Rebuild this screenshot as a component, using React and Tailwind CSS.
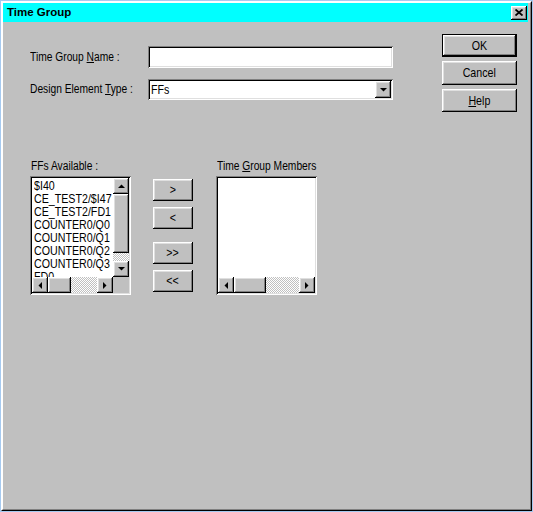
import React from "react";

const raised =
  "bg-[#c0c0c0] shadow-[inset_-1px_-1px_#000,inset_1px_1px_#fff,inset_-2px_-2px_#808080,inset_2px_2px_#dfdfdf]";
const sunken =
  "shadow-[inset_1px_1px_#808080,inset_-1px_-1px_#fff,inset_2px_2px_#000,inset_-2px_-2px_#dfdfdf]";
const dither =
  "bg-[repeating-conic-gradient(#c0c0c0_0%_25%,#ffffff_0%_50%)] bg-[length:2px_2px]";

// no narrow face installed, so squeeze the regular one
function Narrow({ children, center }) {
  return (
    <span
      className={`inline-block whitespace-nowrap scale-x-[0.82] ${
        center ? "origin-center" : "origin-left"
      }`}
    >
      {children}
    </span>
  );
}

function Tri({ dir }) {
  const pts = {
    up: "0,4 7,4 3.5,0.5",
    down: "0,0 7,0 3.5,3.5",
    left: "4,0 4,7 0.5,3.5",
    right: "0,0 0,7 3.5,3.5",
  }[dir];
  const vertical = dir === "up" || dir === "down";
  return (
    <svg width={vertical ? 7 : 4} height={vertical ? 4 : 7} viewBox={vertical ? "0 0 7 4" : "0 0 4 7"}>
      <polygon points={pts} fill="#000" />
    </svg>
  );
}

function ScrollBtn({ dir }) {
  return (
    <div className={`${raised} w-[16px] h-[16px] shrink-0 flex items-center justify-center`}>
      <Tri dir={dir} />
    </div>
  );
}

function HScroll({ thumb }) {
  return (
    <div className="flex h-[16px] flex-1">
      <ScrollBtn dir="left" />
      <div className={`${raised} h-[16px] shrink-0`} style={{ width: thumb }} />
      <div className={`flex-1 ${dither}`} />
      <ScrollBtn dir="right" />
    </div>
  );
}

function ListBox({ items, vscroll }) {
  return (
    <div className={`w-[101px] h-[119px] bg-white p-[2px] ${sunken}`}>
      <div className="h-full flex flex-col">
        <div className="flex flex-1 min-h-0">
          <div className="flex-1 overflow-hidden pl-[2px] pt-px text-[13px] leading-[13px] text-black">
            {items.map((it) => (
              <div key={it} className="whitespace-nowrap">
                <Narrow>{it}</Narrow>
              </div>
            ))}
          </div>
          {vscroll && (
            <div className="w-[16px] flex flex-col">
              <ScrollBtn dir="up" />
              <div className={`${raised} w-[16px] h-[59px] shrink-0`} />
              <div className={`flex-1 ${dither}`} />
              <ScrollBtn dir="down" />
            </div>
          )}
        </div>
        <div className="flex h-[16px]">
          <HScroll thumb={vscroll ? 23 : 32} />
          {vscroll && <div className="w-[16px] h-[16px] bg-[#c0c0c0]" />}
        </div>
      </div>
    </div>
  );
}

function Button({ children, def, className = "" }) {
  return (
    <div className={`${def ? "border border-black" : ""} ${className} flex`}>
      <div className={`${raised} flex-1 flex items-center justify-center text-[13px] text-black`}>
        <Narrow center>{children}</Narrow>
      </div>
    </div>
  );
}

const available = [
  "$I40",
  "CE_TEST2/$I47",
  "CE_TEST2/FD1",
  "COUNTER0/Q0",
  "COUNTER0/Q1",
  "COUNTER0/Q2",
  "COUNTER0/Q3",
  "FD0",
];

export default function App() {
  return (
    <div className="w-[533px] h-[512px] bg-[#a6caf0] p-px font-['Liberation_Sans',Arial,sans-serif] text-black">
      <div className="h-full flex flex-col bg-[#c0c0c0] border border-t-white border-l-white border-r-black border-b-black">
        <div className="flex-1 flex flex-col border border-t-white border-l-white border-r-[#808080] border-b-[#808080] pr-[2px] pb-[2px]">
          {/* Title bar */}
          <div className="h-[19px] bg-[#00ffff] flex items-center pl-[4px] pr-px">
            <span className="font-bold text-[11.5px] leading-none">Time Group</span>
            <div className={`${raised} ml-auto w-[16px] h-[14px] flex items-center justify-center`}>
              <svg width="8" height="7" viewBox="0 0 8 7">
                <path d="M0.5 0.5 L7.5 6.5 M7.5 0.5 L0.5 6.5" stroke="#000" strokeWidth="1.8" />
              </svg>
            </div>
          </div>

          {/* Body */}
          <div className="flex-1 pl-[27px]">
            <div className="flex items-start">
              <div className="pt-[24px] text-[12.5px]">
                <div className="flex items-center">
                  <div className="w-[118px]">
                    <Narrow>
                      Time Group <span className="underline">N</span>ame :
                    </Narrow>
                  </div>
                  <div className={`w-[245px] h-[22px] bg-white ${sunken}`} />
                </div>
                <div className="flex items-center mt-[11px]">
                  <div className="w-[118px]">
                    <Narrow>
                      Design Element <span className="underline">T</span>ype :
                    </Narrow>
                  </div>
                  <div className={`w-[245px] h-[21px] bg-white ${sunken} flex items-center p-[2px]`}>
                    <span className="flex-1 pl-[1px] text-[13px]">
                      <Narrow>FFs</Narrow>
                    </span>
                    <div className={`${raised} w-[16px] h-[17px] flex items-center justify-center`}>
                      <Tri dir="down" />
                    </div>
                  </div>
                </div>
              </div>

              <div className="ml-[49px] pt-[12px] w-[75px] flex flex-col">
                <Button def className="h-[23px]">OK</Button>
                <Button className="h-[24px] mt-[4px]">Cancel</Button>
                <Button className="h-[23px] mt-[4px]">
                  <span className="underline">H</span>elp
                </Button>
              </div>
            </div>

            <div className="flex items-start mt-[46px]">
              <div>
                <div className="h-[16px] leading-[16px] pl-px text-[12.5px]">
                  <Narrow>FFs Available :</Narrow>
                </div>
                <div className="mt-[2px]">
                  <ListBox items={available} vscroll />
                </div>
              </div>

              <div className="ml-[22px] mt-[21px] w-[40px] flex flex-col">
                <Button className="h-[22px]">&gt;</Button>
                <Button className="h-[22px] mt-[6px]">&lt;</Button>
                <Button className="h-[22px] mt-[13px]">&gt;&gt;</Button>
                <Button className="h-[22px] mt-[6px]">&lt;&lt;</Button>
              </div>

              <div className="ml-[23px]">
                <div className="h-[16px] leading-[16px] pl-px text-[12.5px]">
                  <Narrow>
                    Time <span className="underline">G</span>roup Members
                  </Narrow>
                </div>
                <div className="mt-[2px]">
                  <ListBox items={[]} />
                </div>
              </div>
            </div>
          </div>
        </div>
      </div>
    </div>
  );
}
